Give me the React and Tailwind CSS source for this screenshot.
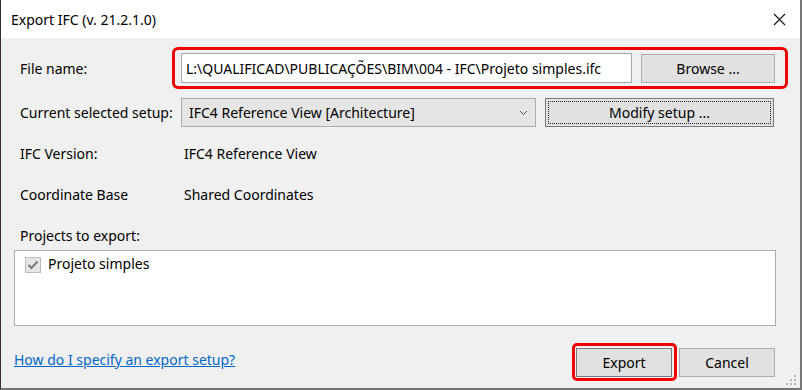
import React from "react";

const font = { fontFamily: '"Noto Sans", "Open Sans", sans-serif' };

function Grip() {
  const dots = [
    [10, 2], [10, 6], [6, 6], [10, 10], [6, 10], [2, 10],
  ];
  return (
    <svg width="13" height="13" viewBox="0 0 13 13" className="absolute right-[3px] bottom-[2px]">
      {dots.map(([x, y], i) => (
        <rect key={i} x={x} y={y} width="2" height="2" fill="#b8b8b8" />
      ))}
    </svg>
  );
}

export default function App() {
  return (
    <div
      className="relative w-[802px] h-[390px] bg-[#f0f0f0] border-l border-l-[#3b2d2d] border-r-2 border-r-[#767676] border-b-2 border-b-[#767676] text-[14px] text-black overflow-hidden"
      style={font}
    >
      {/* Title bar */}
      <div className="h-[38px] bg-white flex items-center justify-between pl-[10px] pr-[14px]">
        <span className="text-[14px]">Export IFC (v. 21.2.1.0)</span>
        <svg width="13" height="13" viewBox="0 0 13 13">
          <path d="M1 1 L12 12 M12 1 L1 12" stroke="#111" strokeWidth="1.1" />
        </svg>
      </div>

      {/* File name */}
      <div className="flex items-center mt-[9px] pl-[19px]">
        <span className="w-[152px]">File name:</span>
        <div className="flex items-center border-[3px] border-[#ee0000] rounded-[6px] pl-[6px] pr-[10px] py-[3px] w-[616px] h-[42px]">
          <div className="w-[451px] h-[30px] bg-white border border-[#a8a8a8] flex items-center pl-[4px] whitespace-nowrap overflow-hidden">
            L:\QUALIFICAD\PUBLICAÇÕES\BIM\004 - IFC\Projeto simples.ifc
          </div>
          <button className="ml-[9px] w-[134px] h-[29px] bg-[#e1e1e1] border border-[#adadad]">
            Browse ...
          </button>
        </div>
      </div>

      {/* Setup */}
      <div className="flex items-center mt-[9px] pl-[19px]">
        <span className="w-[161px]">Current selected setup:</span>
        <div className="w-[355px] h-[29px] bg-[#e5e5e5] border border-[#acacac] flex items-center justify-between pl-[7px] pr-[7px]">
          <span>IFC4 Reference View [Architecture]</span>
          <svg width="9" height="6" viewBox="0 0 9 6">
            <path d="M1 1 L4.5 4.5 L8 1" stroke="#555" strokeWidth="1" fill="none" />
          </svg>
        </div>
        <button className="ml-[9px] w-[229px] h-[29px] bg-[#e1e1e1] border border-[#7a7a7a] p-[2px]">
          <div className="w-full h-full border border-dotted border-[#222] flex items-center justify-center">
            Modify setup ...
          </div>
        </button>
      </div>

      {/* Info rows */}
      <div className="flex items-center h-[20px] mt-[16px] pl-[19px]">
        <span className="w-[164px]">IFC Version:</span>
        <span>IFC4 Reference View</span>
      </div>
      <div className="flex items-center h-[20px] mt-[21px] pl-[19px]">
        <span className="w-[164px]">Coordinate Base</span>
        <span>Shared Coordinates</span>
      </div>
      <div className="flex items-center h-[20px] mt-[21px] pl-[19px]">
        <span>Projects to export:</span>
      </div>

      {/* Projects list */}
      <div className="ml-[13px] mt-[5px] w-[762px] h-[76px] bg-white border border-[#acacac] pt-[5px] pl-[10px]">
        <div className="flex items-center gap-[7px]">
          <div className="w-[16px] h-[16px] bg-[#e6e6e6] border border-[#bcbcbc] flex items-center justify-center">
            <svg width="12" height="10" viewBox="0 0 12 10">
              <path d="M1.5 5 L4.5 8 L10.5 1.5" stroke="#777" strokeWidth="2" fill="none" />
            </svg>
          </div>
          <span className="-mt-[3px]">Projeto simples</span>
        </div>
      </div>

      {/* Footer */}
      <div className="flex items-center mt-[17px] pl-[13px]">
        <a href="#" className="text-[#0066cc] underline -mt-[6px]">
          How do I specify an export setup?
        </a>
        <div className="ml-auto flex items-center mr-[25px]">
          <div className="border-[3px] border-[#ee0000] rounded-[5px] pl-[1px] pr-[2px] pt-[2px] pb-[1px]">
            <button className="w-[96px] h-[29px] bg-[#e1e1e1] border border-[#7a7a7a]">Export</button>
          </div>
          <button className="ml-[2px] w-[96px] h-[29px] bg-[#e1e1e1] border border-[#adadad]">Cancel</button>
        </div>
      </div>

      <Grip />
    </div>
  );
}
